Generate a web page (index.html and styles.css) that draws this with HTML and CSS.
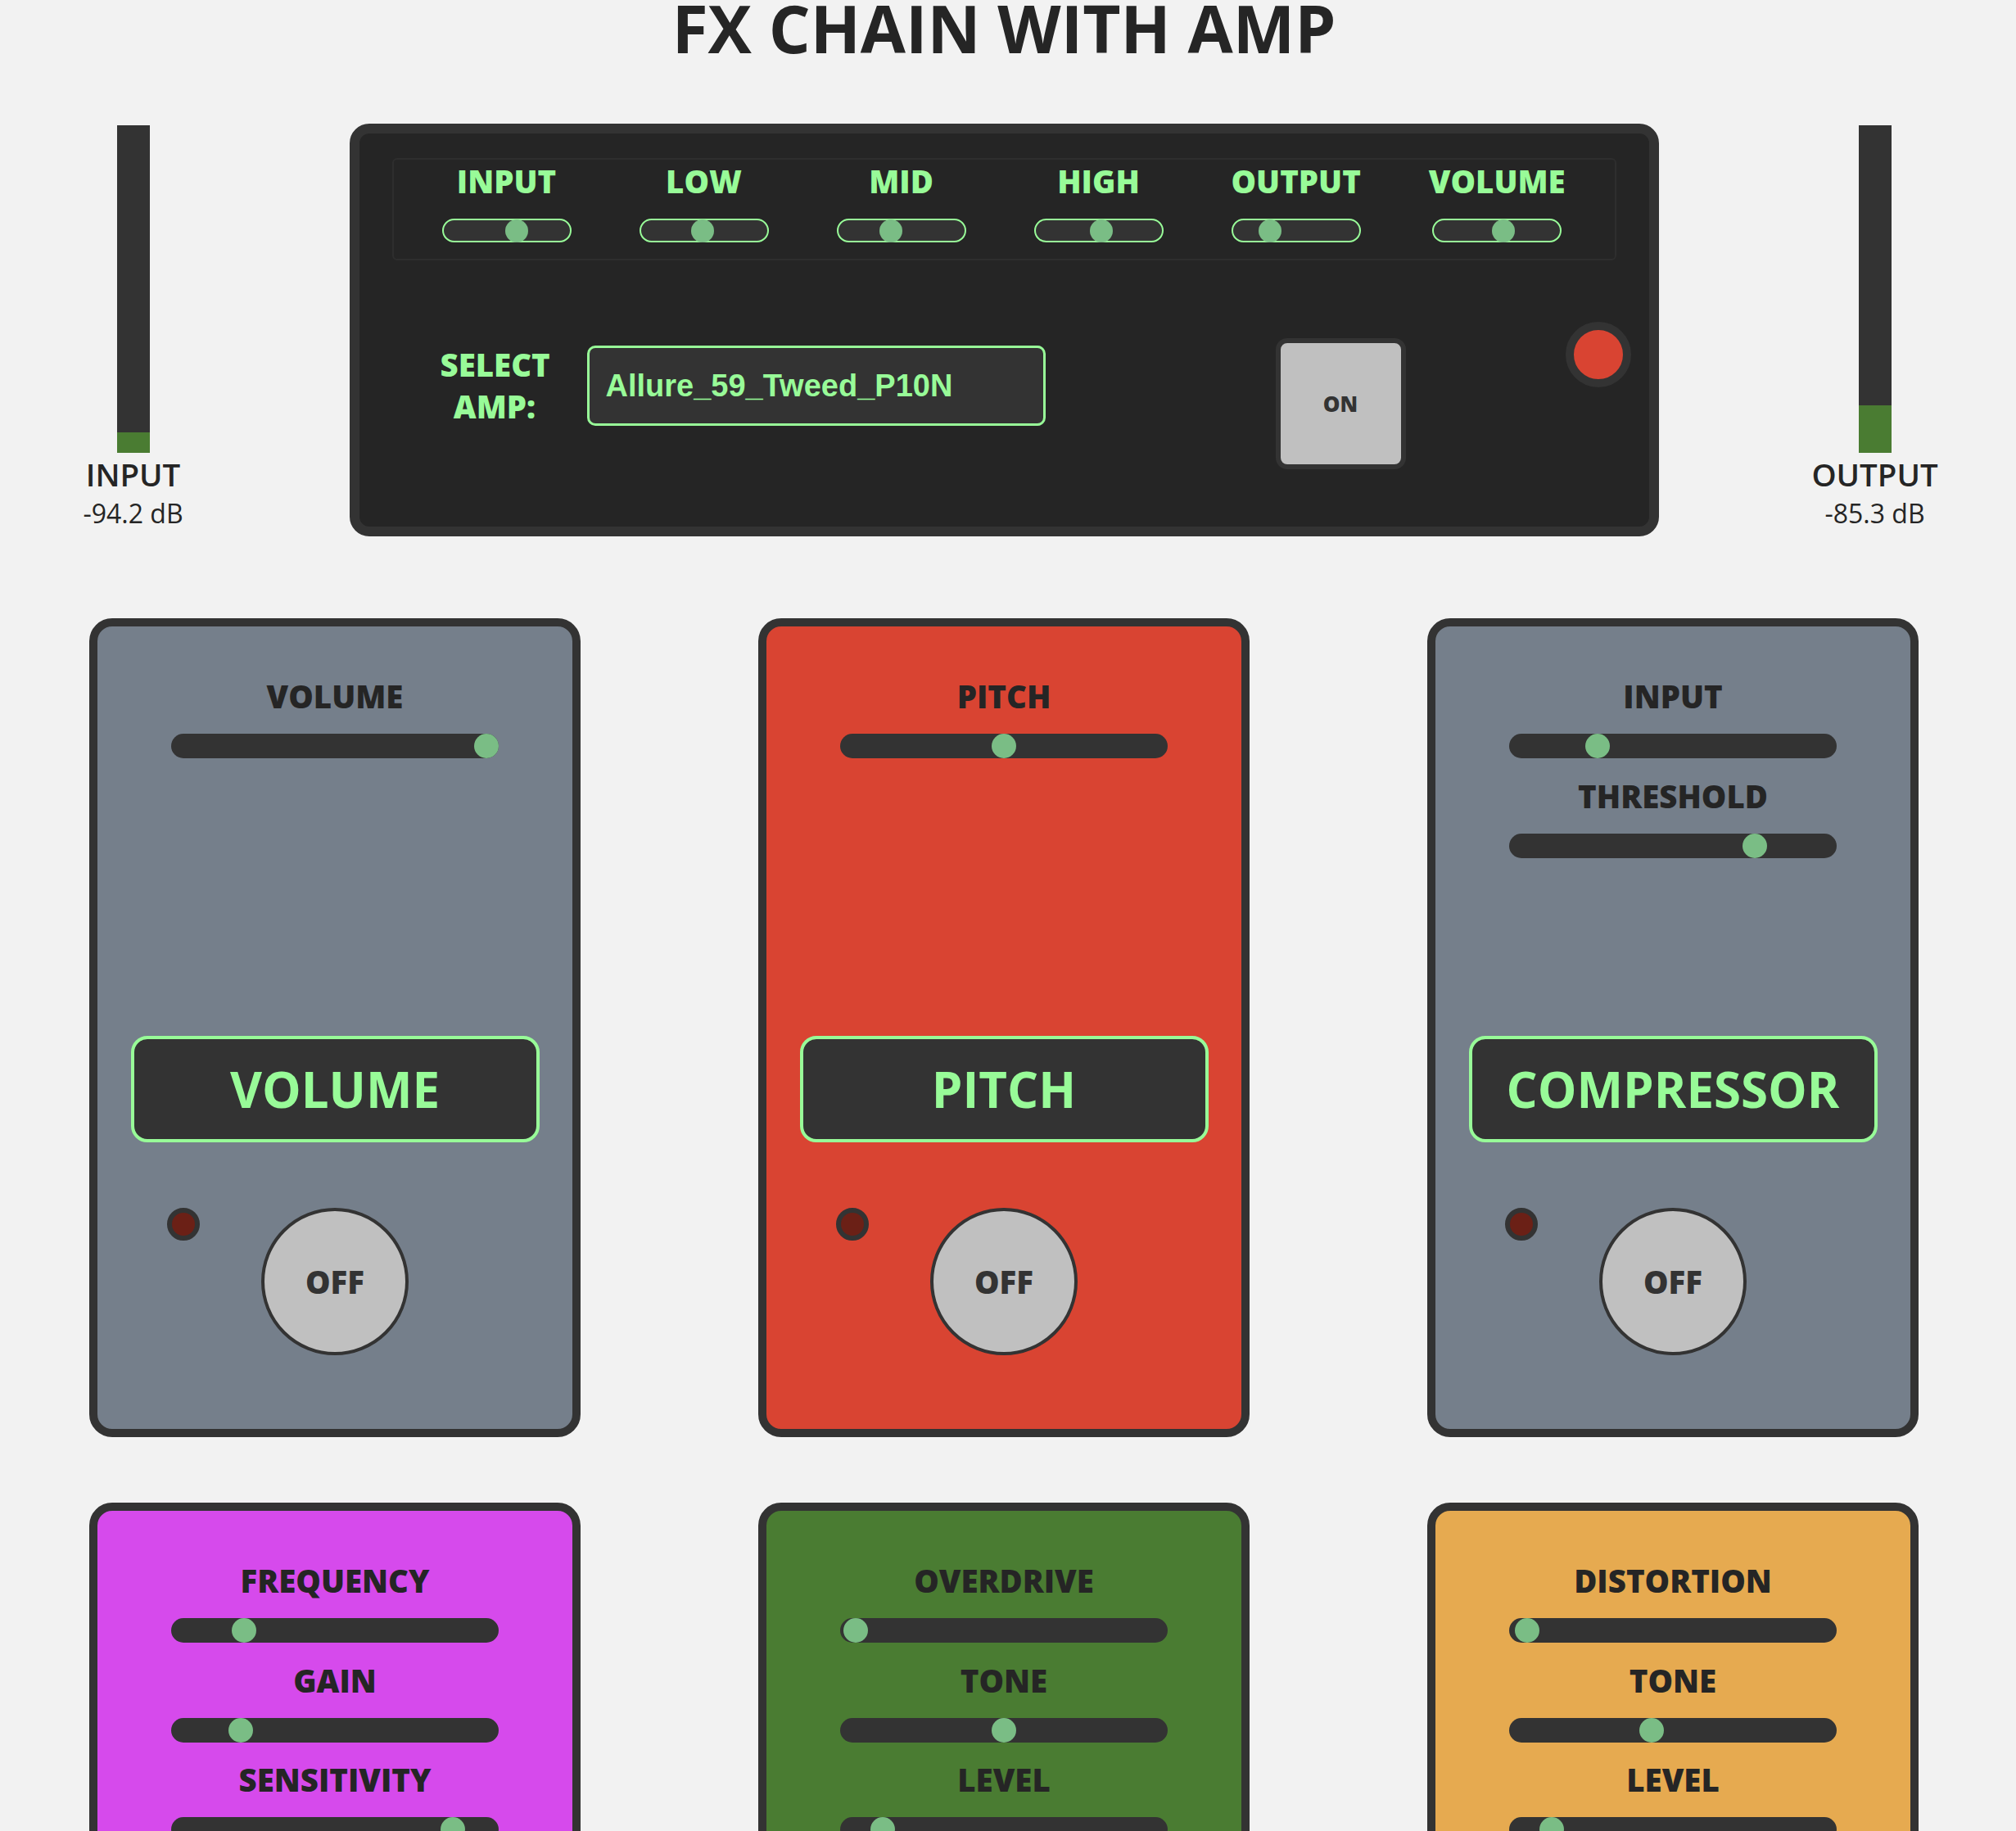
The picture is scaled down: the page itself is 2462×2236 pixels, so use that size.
FILE: index.html
```html
<!DOCTYPE html>
<html lang="en">
<head>
  <meta charset="UTF-8">
  <meta name="viewport" content="width=device-width, initial-scale=1.0">
  <title>FX Chain with Amp</title>
  <link rel="stylesheet" href="styles.css">
</head>
<body>
  <h1 class="title">FX CHAIN WITH AMP</h1>

  <!-- Meters + amp head -->
  <section class="rig">
    <div class="meter">
      <div class="meter-bar">
        <div class="meter-fill" style="height: 6.25%"></div>
      </div>
      <div class="meter-label">INPUT</div>
      <div class="meter-value">-94.2 dB</div>
    </div>

    <div class="amp">
      <div class="amp-knobs">
        <div class="knob">
          <label>INPUT</label>
          <input type="range" class="amp-slider" min="0" max="100" value="60">
        </div>
        <div class="knob">
          <label>LOW</label>
          <input type="range" class="amp-slider" min="0" max="100" value="49">
        </div>
        <div class="knob">
          <label>MID</label>
          <input type="range" class="amp-slider" min="0" max="100" value="40">
        </div>
        <div class="knob">
          <label>HIGH</label>
          <input type="range" class="amp-slider" min="0" max="100" value="53">
        </div>
        <div class="knob">
          <label>OUTPUT</label>
          <input type="range" class="amp-slider" min="0" max="100" value="25">
        </div>
        <div class="knob">
          <label>VOLUME</label>
          <input type="range" class="amp-slider" min="0" max="100" value="56">
        </div>
      </div>

      <div class="amp-controls">
        <div class="amp-select-label">SELECT<br>AMP:</div>
        <select class="amp-select">
          <option>Allure_59_Tweed_P10N</option>
        </select>
        <button class="amp-power">ON</button>
        <div class="amp-led"></div>
      </div>
    </div>

    <div class="meter">
      <div class="meter-bar">
        <div class="meter-fill" style="height: 14.5%"></div>
      </div>
      <div class="meter-label">OUTPUT</div>
      <div class="meter-value">-85.3 dB</div>
    </div>
  </section>

  <!-- Pedals -->
  <section class="pedalboard">
    <div class="pedal slate">
      <div class="controls">
        <div class="control">
          <label>VOLUME</label>
          <input type="range" class="pedal-slider" min="0" max="100" value="100">
        </div>
      </div>
      <div class="pedal-name">VOLUME</div>
      <div class="foot">
        <div class="led"></div>
        <button class="footswitch">OFF</button>
      </div>
    </div>

    <div class="pedal red">
      <div class="controls">
        <div class="control">
          <label>PITCH</label>
          <input type="range" class="pedal-slider" min="0" max="100" value="50">
        </div>
      </div>
      <div class="pedal-name">PITCH</div>
      <div class="foot">
        <div class="led"></div>
        <button class="footswitch">OFF</button>
      </div>
    </div>

    <div class="pedal slate">
      <div class="controls">
        <div class="control">
          <label>INPUT</label>
          <input type="range" class="pedal-slider" min="0" max="100" value="25">
        </div>
        <div class="control">
          <label>THRESHOLD</label>
          <input type="range" class="pedal-slider" min="0" max="100" value="77">
        </div>
      </div>
      <div class="pedal-name">COMPRESSOR</div>
      <div class="foot">
        <div class="led"></div>
        <button class="footswitch">OFF</button>
      </div>
    </div>

    <div class="pedal magenta">
      <div class="controls">
        <div class="control">
          <label>FREQUENCY</label>
          <input type="range" class="pedal-slider" min="0" max="100" value="20">
        </div>
        <div class="control">
          <label>GAIN</label>
          <input type="range" class="pedal-slider" min="0" max="100" value="19">
        </div>
        <div class="control">
          <label>SENSITIVITY</label>
          <input type="range" class="pedal-slider" min="0" max="100" value="89">
        </div>
      </div>
      <div class="pedal-name">AUTO WAH</div>
      <div class="foot">
        <div class="led"></div>
        <button class="footswitch">OFF</button>
      </div>
    </div>

    <div class="pedal green">
      <div class="controls">
        <div class="control">
          <label>OVERDRIVE</label>
          <input type="range" class="pedal-slider" min="0" max="100" value="1">
        </div>
        <div class="control">
          <label>TONE</label>
          <input type="range" class="pedal-slider" min="0" max="100" value="50">
        </div>
        <div class="control">
          <label>LEVEL</label>
          <input type="range" class="pedal-slider" min="0" max="100" value="10">
        </div>
      </div>
      <div class="pedal-name">OVERDRIVE</div>
      <div class="foot">
        <div class="led"></div>
        <button class="footswitch">OFF</button>
      </div>
    </div>

    <div class="pedal orange">
      <div class="controls">
        <div class="control">
          <label>DISTORTION</label>
          <input type="range" class="pedal-slider" min="0" max="100" value="2">
        </div>
        <div class="control">
          <label>TONE</label>
          <input type="range" class="pedal-slider" min="0" max="100" value="43">
        </div>
        <div class="control">
          <label>LEVEL</label>
          <input type="range" class="pedal-slider" min="0" max="100" value="10">
        </div>
      </div>
      <div class="pedal-name">DISTORTION</div>
      <div class="foot">
        <div class="led"></div>
        <button class="footswitch">OFF</button>
      </div>
    </div>
  </section>
</body>
</html>
```

FILE: styles.css
```css
* {
  margin: 0;
  padding: 0;
  box-sizing: border-box;
}

body {
  font-family: "Open Sans", "Liberation Sans", sans-serif;
  background-color: #f2f2f2;
  color: #252525;
  padding-right: 10px;
}

.title {
  font-size: 80px;
  font-weight: 700;
  line-height: 68px;
  text-align: center;
  color: #252525;
}

/* Meters + amp row */
.rig {
  display: flex;
  justify-content: center;
  align-items: flex-start;
  gap: 164px;
  margin-top: 83px;
}

.meter {
  width: 200px;
  display: flex;
  flex-direction: column;
  align-items: center;
  padding-top: 2px;
}

.meter-bar {
  width: 40px;
  height: 400px;
  background-color: #333;
  display: flex;
  flex-direction: column;
  justify-content: flex-end;
}

.meter-fill {
  background-color: #4a7c32;
}

.meter-label {
  font-size: 38.4px;
  font-weight: 550;
}

.meter-value {
  font-size: 32px;
}

/* Amp head */
.amp {
  width: 1599px;
  height: 504px;
  flex-shrink: 0;
  background-color: #252525;
  border: 12px solid #333;
  border-radius: 24px;
  padding: 30px 40px 70px;
}

.amp-knobs {
  display: flex;
  gap: 83px;
  height: 125px;
  padding-left: 59px;
  border: 2px solid #2e2e2e;
  border-radius: 6px;
}

.knob {
  display: flex;
  flex-direction: column;
  align-items: center;
}

.knob label {
  font-size: 38.4px;
  font-weight: 800;
  color: #98fb98;
}

.amp-slider {
  -webkit-appearance: none;
  appearance: none;
  width: 158px;
  height: 29px;
  margin-top: 20px;
  background-color: #333;
  border: 2px solid #98fb98;
  border-radius: 15px;
}

.amp-slider::-webkit-slider-runnable-track {
  height: 25px;
}

.amp-slider::-webkit-slider-thumb {
  -webkit-appearance: none;
  width: 28px;
  height: 28px;
  margin-top: -1.5px;
  border-radius: 50%;
  background-color: #7abd85;
}

.amp-controls {
  display: flex;
  align-items: flex-start;
  margin-top: 75px;
  padding-left: 59px;
}

.amp-controls > * {
  flex-shrink: 0;
}

.amp-select-label {
  width: 133px;
  margin-top: 27px;
  font-size: 38.4px;
  font-weight: 800;
  line-height: 51px;
  text-align: center;
  color: #98fb98;
}

.amp-select {
  -webkit-appearance: none;
  appearance: none;
  width: 560px;
  height: 98px;
  margin: 29px 0 0 46px;
  padding: 0 20px;
  background-color: #333;
  border: 3px solid #98fb98;
  border-radius: 10px;
  color: #98fb98;
  font-family: "Liberation Sans", Arial, sans-serif;
  font-size: 38px;
  font-weight: 700;
}

.amp-power {
  width: 159px;
  height: 160px;
  margin: 20px 0 0 281px;
  background-color: #c0c0c0;
  border: 6px solid #333;
  border-radius: 14px;
  color: #333;
  font-family: "Open Sans", sans-serif;
  font-size: 26px;
  font-weight: 800;
}

.amp-led {
  width: 80px;
  height: 80px;
  margin-left: 195px;
  border: 10px solid #333;
  border-radius: 50%;
  background-color: #d94432;
}

/* Pedals */
.pedalboard {
  display: grid;
  grid-template-columns: repeat(3, 600px);
  justify-content: center;
  column-gap: 217px;
  row-gap: 80px;
  margin-top: 100px;
  padding-bottom: 80px;
}

.pedal {
  height: 1000px;
  border: 10px solid #333;
  border-radius: 28px;
  padding: 59px 0 90px;
  display: flex;
  flex-direction: column;
  align-items: center;
}

.pedal.slate { background-color: #757f8b; }
.pedal.red { background-color: #d94432; }
.pedal.magenta { background-color: #d64aec; }
.pedal.green { background-color: #4a7c32; }
.pedal.orange { background-color: #e6aa50; }

.control {
  display: flex;
  flex-direction: column;
  align-items: center;
  margin-bottom: 19.5px;
}

.control label {
  font-size: 38.4px;
  font-weight: 800;
  color: #252525;
}

.pedal-slider {
  -webkit-appearance: none;
  appearance: none;
  width: 400px;
  height: 30px;
  margin-top: 20px;
  background-color: #333;
  border-radius: 15px;
}

.pedal-slider::-webkit-slider-runnable-track {
  height: 30px;
}

.pedal-slider::-webkit-slider-thumb {
  -webkit-appearance: none;
  width: 30px;
  height: 30px;
  border-radius: 50%;
  background-color: #7abd85;
}

.pedal-name {
  margin-top: auto;
  width: 499px;
  height: 130px;
  display: flex;
  align-items: center;
  justify-content: center;
  background-color: #333;
  border: 4px solid #98fb98;
  border-radius: 20px;
  color: #98fb98;
  font-size: 60px;
  font-weight: 700;
}

.foot {
  width: 100%;
  margin-top: 80px;
  display: grid;
  grid-template-columns: 1fr 180px 1fr;
}

.led {
  width: 40px;
  height: 40px;
  margin-left: 85px;
  border: 6px solid #333;
  border-radius: 50%;
  background-color: #6b2016;
}

.footswitch {
  width: 180px;
  height: 180px;
  border: 4px solid #333;
  border-radius: 50%;
  background-color: #c0c0c0;
  color: #333;
  font-family: "Open Sans", sans-serif;
  font-size: 38.4px;
  font-weight: 800;
}
```
